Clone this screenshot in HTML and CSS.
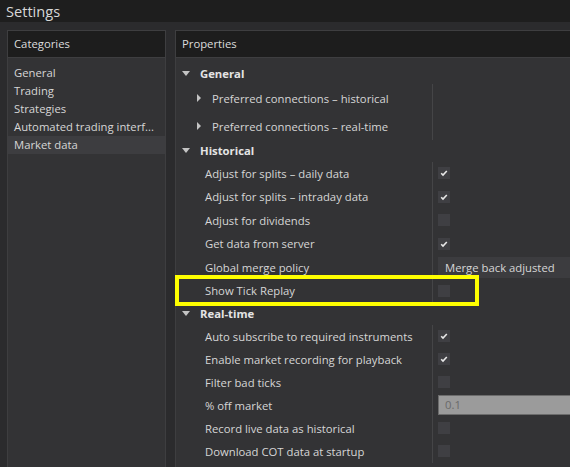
FILE: index.html
```html
<!DOCTYPE html>
<html>
<head>
<meta charset="utf-8">
<link rel="stylesheet" href="styles.css">
</head>
<body>
<div class="titlebar">Settings</div>
<div class="main">
  <div class="panel categories">
    <div class="panel-header">Categories</div>
    <ul class="cat-list">
      <li>General</li>
      <li>Trading</li>
      <li>Strategies</li>
      <li>Automated trading interf...</li>
      <li class="selected">Market data</li>
    </ul>
  </div>
  <div class="panel properties">
    <div class="panel-header">Properties</div>
    <div class="grid">
      <div class="group-row"><span class="tri-down"></span><span class="group-label">General</span></div>
      <div class="children">
        <div class="row tall sub"><span class="tri-right"></span><span class="label">Preferred connections – historical</span><span class="value"></span></div>
        <div class="row tall sub"><span class="tri-right"></span><span class="label">Preferred connections – real-time</span><span class="value"></span></div>
      </div>
      <div class="group-row g-hist"><span class="tri-down"></span><span class="group-label">Historical</span></div>
      <div class="children">
        <div class="row mid"><span class="label">Adjust for splits – daily data</span><span class="value"><span class="cb checked"><svg viewBox="0 0 12 12" width="12" height="12"><path d="M3.2 6.2 L5 8 L8.8 4" fill="none" stroke="#e8e8e8" stroke-width="1.6"/></svg></span></span></div>
        <div class="row mid"><span class="label">Adjust for splits – intraday data</span><span class="value"><span class="cb checked"><svg viewBox="0 0 12 12" width="12" height="12"><path d="M3.2 6.2 L5 8 L8.8 4" fill="none" stroke="#e8e8e8" stroke-width="1.6"/></svg></span></span></div>
        <div class="row mid"><span class="label">Adjust for dividends</span><span class="value"><span class="cb"></span></span></div>
        <div class="row mid"><span class="label">Get data from server</span><span class="value"><span class="cb checked"><svg viewBox="0 0 12 12" width="12" height="12"><path d="M3.2 6.2 L5 8 L8.8 4" fill="none" stroke="#e8e8e8" stroke-width="1.6"/></svg></span></span></div>
        <div class="row mid"><span class="label">Global merge policy</span><span class="value"><span class="select">Merge back adjusted</span></span></div>
        <div class="row mid"><span class="label">Show Tick Replay</span><span class="value"><span class="cb"></span></span><span class="yellow-box"></span></div>
      </div>
      <div class="group-row"><span class="tri-down"></span><span class="group-label">Real-time</span></div>
      <div class="children">
        <div class="row"><span class="label">Auto subscribe to required instruments</span><span class="value"><span class="cb checked"><svg viewBox="0 0 12 12" width="12" height="12"><path d="M3.2 6.2 L5 8 L8.8 4" fill="none" stroke="#e8e8e8" stroke-width="1.6"/></svg></span></span></div>
        <div class="row"><span class="label">Enable market recording for playback</span><span class="value"><span class="cb checked"><svg viewBox="0 0 12 12" width="12" height="12"><path d="M3.2 6.2 L5 8 L8.8 4" fill="none" stroke="#e8e8e8" stroke-width="1.6"/></svg></span></span></div>
        <div class="row"><span class="label">Filter bad ticks</span><span class="value"><span class="cb"></span></span></div>
        <div class="row"><span class="label">% off market</span><span class="value"><span class="input">0.1</span></span></div>
        <div class="row"><span class="label">Record live data as historical</span><span class="value"><span class="cb"></span></span></div>
        <div class="row"><span class="label">Download COT data at startup</span><span class="value"><span class="cb"></span></span></div>
      </div>
    </div>
  </div>
</div>
</body>
</html>
```

FILE: styles.css
```css
html, body {
  margin: 0;
  padding: 0;
}
body {
  width: 570px;
  height: 467px;
  overflow: hidden;
  background: #2b2b2d;
  font-family: "Open Sans", "Noto Sans", sans-serif;
  font-size: 11.3px;
  color: #d6d6d6;
}
.titlebar {
  height: 22px;
  background: #1e1e1e;
  font-size: 14.6px;
  line-height: 22px;
  padding-left: 6px;
  color: #d8d8d8;
  box-sizing: border-box;
}
.main {
  display: flex;
  gap: 9px;
  padding: 8px 0 0 7px;
  height: 445px;
  box-sizing: border-box;
}
.panel {
  background: #333335;
  border: 1px solid #3e3e40;
  border-bottom: none;
  box-sizing: border-box;
}
.categories {
  width: 159px;
  flex: none;
}
.properties {
  flex: none;
  width: 410px;
}
.panel-header {
  height: 26px;
  line-height: 26px;
  background: #1d1d1d;
  border-bottom: 1px solid #3e3e40;
  padding-left: 6px;
  color: #dcdcdc;
}
.cat-list {
  list-style: none;
  margin: 0;
  padding: 6px 0 0 0;
}
.cat-list li {
  height: 18px;
  line-height: 18px;
  padding-left: 6px;
  white-space: nowrap;
}
.cat-list li.selected {
  background: #3d3d40;
}
.grid {
  padding-top: 4px;
}
.group-row {
  height: 22px;
  display: flex;
  align-items: center;
  padding-left: 6px;
}
.g-hist { height: 21.5px; }
.tri-down {
  width: 0;
  height: 0;
  border-left: 4.5px solid transparent;
  border-right: 4.5px solid transparent;
  border-top: 5px solid #c4c4c4;
  margin-right: 10px;
}
.group-label {
  font-weight: bold;
  color: #e4e4e4;
}
.children {
  display: flex;
  flex-direction: column;
}
.row {
  height: 23px;
  display: flex;
  align-items: center;
  position: relative;
}
.row.tall { height: 28px; }
.row.mid { height: 23.5px; }
.label {
  width: 256px;
  padding-left: 29px;
  box-sizing: border-box;
  white-space: nowrap;
  flex: none;
}
.row.sub .label {
  padding-left: 0;
  width: 220px;
}
.tri-right {
  width: 0;
  height: 0;
  border-top: 4px solid transparent;
  border-bottom: 4px solid transparent;
  border-left: 4px solid #c4c4c4;
  margin-left: 21px;
  margin-right: 11px;
  flex: none;
}
.value {
  align-self: stretch;
  flex: 1;
  border-left: 1px solid #454547;
  display: flex;
  align-items: center;
  padding-left: 5px;
}
.cb {
  width: 12px;
  height: 12px;
  background: #3f3f43;
  display: block;
}
.cb svg { display: block; }
.select {
  background: #3c3c3f;
  height: 21px;
  line-height: 21px;
  flex: 1;
  padding-left: 7px;
  color: #d6d6d6;
}
.input {
  background: #9b9b9b;
  border: 1px solid #6c6c6c;
  height: 18px;
  line-height: 18px;
  flex: 1;
  padding-left: 6px;
  color: #6a6a6a;
  box-sizing: content-box;
}
.yellow-box {
  position: absolute;
  left: -1px;
  top: -4.5px;
  width: 304px;
  height: 31px;
  border: 4px solid #ffff00;
  box-sizing: border-box;
  pointer-events: none;
}
```
